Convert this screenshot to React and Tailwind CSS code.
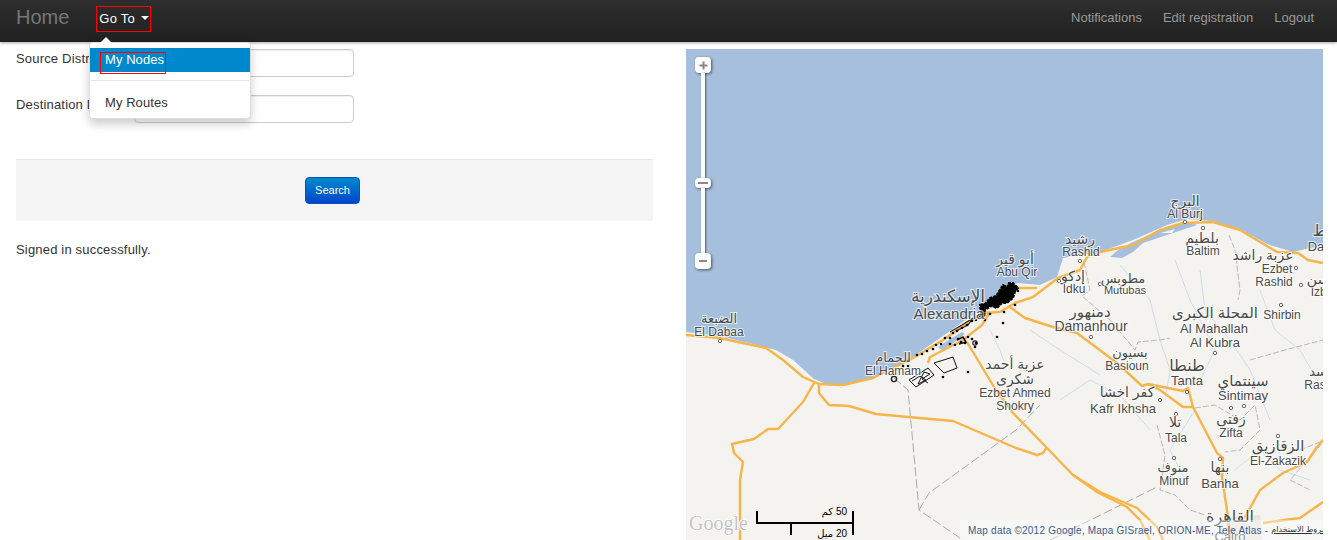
const LAND = '686,332 719,336 749,343 776,350 793,360 814,379 829,385 853,384 879,375 900,365 913,357 930,345 943,336 967,319 983,308 1007,286 1018,283 1040,285 1057,277 1063,258 1100,252 1133,240 1167,225 1187,219 1213,221 1240,229 1267,244 1293,252 1310,248 1323,246 1323,540 686,540'

const ROADS = [
  '686,335 719,338 766,348 783,360 803,377 819,384 843,385 873,378 913,358 943,340 963,326 983,313 1000,312',
  '814,383 803,402 778,429 768,429 754,439 732,444 734,453 743,462 740,480 740,540',
  '819,384 819,393 829,405 849,406 876,414 919,418 953,421 1016,448 1037,455 1043,453 1047,447',
  '967,342 994,387 1013,413 1047,448 1073,475 1100,492 1137,508 1157,527 1163,540',
  '1073,475 1097,492 1127,507 1140,520 1150,540',
  '1000,312 1015,303 1033,297 1058,278 1080,270 1087,257 1100,252 1133,245 1160,230 1183,223 1213,222 1240,230 1277,252 1298,253 1308,260 1323,263',
  '1000,288 1037,288',
  '1010,307 1025,318 1053,327 1077,333 1117,363 1142,386 1148,384 1183,391 1188,388 1193,407 1217,453 1223,458 1222,477 1228,517 1230,540',
  '1148,384 1160,390 1183,407 1193,407',
  '1245,517 1260,490 1283,473 1307,462 1317,447 1323,440',
  '1263,523 1300,518 1323,502',
  '928,363 930,357 963,340 982,325 990,312',
]

const BORDERS = [
  '894,378 908,390 919,510 963,540',
  '919,510 929,493 1016,430 1040,405',
  '1050,540 1157,487',
]

const PROVINCE_LINES = [
  '1084,262 1090,290 1082,296 1110,320 1135,350 1138,342 1160,340 1170,338',
  '1229,235 1235,250 1240,290 1238,300',
  '1157,425 1165,455 1160,490 1175,495 1190,510 1205,515',
  '1195,408 1215,405 1240,420 1255,405 1260,430 1240,450 1225,452',
  '1300,450 1325,440 1290,480 1310,490',
  '1250,360 1285,350 1323,340',
]

const RIVERS = [
  '1120,265 1150,300 1160,340 1170,370 1165,400',
  '1200,270 1205,310 1230,340 1250,370 1270,420',
  '1175,260 1190,300 1215,350 1200,380',
  '1260,290 1275,330 1300,350 1323,390',
  '1060,400 1090,380 1120,395 1150,430',
  '1235,470 1260,450 1280,470 1310,480',
  '1030,330 1060,350 1100,375',
  '990,330 1000,350 1005,365',
  '1195,410 1170,450 1185,480',
]

const LABELS = [
  ['البرج', 1185, 206, 14], ['Al Burj', 1185, 218, 12], ['بلطيم', 1202, 243, 14], ['Baltim', 1203, 255, 12],
  ['رشيد', 1080, 244, 14], ['Rashid', 1081, 256, 12], ['أبو قير', 1015, 264, 14], ['Abu Qir', 1017, 276, 12],
  ['إدكو', 1073, 281, 14], ['Idku', 1074, 293, 12], ['مطوبس', 1123, 283, 13], ['Mutubas', 1125, 294, 11],
  ['دمنهور', 1090, 317, 15], ['Damanhour', 1091, 331, 14], ['بسيون', 1130, 357, 13], ['Basioun', 1127, 370, 12],
  ['المحلة الكبرى', 1215, 318, 15], ['Al Mahallah', 1214, 333, 13], ['Al Kubra', 1215, 347, 13],
  ['عزبة راشد', 1263, 260, 14], ['Ezbet', 1277, 273, 12], ['Rashid', 1274, 286, 12], ['Shirbin', 1282, 319, 12],
  ['Izba', 1322, 296, 12], ['سن', 1318, 284, 14], ['Da', 1316, 251, 13], ['ط', 1320, 236, 16], ['Ras', 1315, 389, 12], ['سد', 1318, 376, 13],
  ['طنطا', 1187, 371, 16], ['Tanta', 1187, 385, 13], ['سينتماي', 1243, 386, 15], ['Sintimay', 1243, 400, 13],
  ['زفتى', 1231, 424, 14], ['Zifta', 1231, 437, 12], ['الزقازيق', 1278, 451, 15], ['El-Zakazik', 1278, 465, 12],
  ['بنها', 1220, 472, 14], ['Banha', 1220, 488, 13], ['القاهرة', 1230, 522, 16], ['Cairo', 1230, 541, 13],
  ['منوف', 1173, 472, 13], ['Minuf', 1174, 485, 12], ['تلا', 1175, 427, 14], ['Tala', 1176, 442, 12],
  ['كفر اخشا', 1127, 397, 14], ['Kafr Ikhsha', 1123, 413, 13],
  ['عزبة أحمد', 1015, 369, 14], ['شكرى', 1015, 384, 14], ['Ezbet Ahmed', 1015, 397, 12], ['Shokry', 1015, 410, 12],
  ['الإسكندرية', 948, 302, 17], ['Alexandria', 949, 319, 15],
  ['الضبعة', 719, 323, 13], ['El Dabaa', 719, 336, 12], ['الحمام', 893, 362, 13], ['El Hamam', 893, 375, 12],
]

const TOWNS = [
  [1185, 222], [1203, 228], [1080, 261], [1296, 268], [1301, 285], [1281, 305], [1059, 281], [1100, 284],
  [1091, 337], [1215, 353], [1187, 392], [1160, 400], [1176, 414], [1174, 458], [1220, 459], [1231, 408],
  [1244, 406], [1278, 436], [720, 341],
]

// the black route nodes along the Alexandria shore
const NODES = [
  [1016, 288], [1018, 291], [1004, 312], [1015, 305], [980, 316], [976, 320], [972, 321], [967, 325], [962, 328],
  [957, 331], [953, 333], [950, 338], [945, 338], [941, 344], [936, 345], [933, 349], [927, 351], [922, 354], [917, 355], [908, 361],
  [903, 366], [880, 374], [908, 366], [958, 339], [961, 342], [965, 343], [955, 345], [972, 339], [976, 343], [975, 347], [968, 372],
  [943, 377], [997, 337], [1003, 323], [950, 344], [968, 337], [990, 314], [985, 320],
]

function MapCanvas() {
  return (
    <svg viewBox="686 49 637 491" className="block w-full h-full">
      <rect x="686" y="49" width="637" height="491" fill="#a5bfdd" />
      <polygon points={LAND} fill="#f4f3f0" />
      {/* lakes */}
      <polygon points="1110,257 1122,258 1133,252 1143,243 1167,235 1197,225 1187,221 1167,227 1133,242 1118,250" fill="#a5bfdd" />
      <polygon points="1160,233 1168,231 1175,229 1172,233" fill="#f4f3f0" />
      <polygon points="1159,240 1166,237 1168,241 1162,243" fill="#f4f3f0" />
      <polygon points="938,347 950,339 962,332 965,334 952,344 942,350" fill="#a5bfdd" />
      <polygon points="1225,517 1260,515 1262,540 1228,540" fill="#e6e5e0" />

      {RIVERS.map(p => <polyline key={p} points={p} fill="none" stroke="#cfdcec" strokeWidth="1" />)}
      {PROVINCE_LINES.map(p => <polyline key={p} points={p} fill="none" stroke="#a9a9a6" strokeWidth="0.8" strokeDasharray="6 2" />)}
      {BORDERS.map(p => <polyline key={p} points={p} fill="none" stroke="#aaaaa8" strokeWidth="1" strokeDasharray="9 3" />)}
      {ROADS.map(p => <polyline key={p} points={p} fill="none" stroke="#f5b548" strokeWidth="2.4" strokeLinejoin="round" />)}

      {/* imported node overlay */}
      <polygon points="980,305 986,303 990,298 996,296 1003,285 1007,287 1009,283 1013,283 1018,288 1015,292 1013,298 1007,303 1002,303 997,308 991,306 985,310 984,317 981,313" fill="#000" stroke="#000" strokeWidth="2" strokeDasharray="3 1" />
      <polygon points="909,380 928,368 934,375 916,387" fill="none" stroke="#111" strokeWidth="1" />
      <polygon points="934,363 953,357 957,368 944,373" fill="none" stroke="#111" strokeWidth="1" />
      <polyline points="912,381 920,376 926,380 918,384 924,372 930,374 922,379 928,383" fill="none" stroke="#111" strokeWidth="1" />
      <polyline points="950,332 962,325 973,318 968,325 956,331" fill="none" stroke="#222" strokeWidth="1.2" />
      <polyline points="957,340 963,337 966,342 959,344" fill="none" stroke="#111" strokeWidth="1.6" />
      <circle cx="894" cy="379" r="2.6" fill="none" stroke="#222" strokeWidth="1.4" />
      <circle cx="975" cy="343" r="2.2" fill="none" stroke="#222" strokeWidth="1.2" />
      {NODES.map(([x, y]) => <circle key={`${x}-${y}`} cx={x} cy={y} r="1.3" fill="#000" />)}

      {TOWNS.map(([x, y]) => <circle key={`${x}-${y}`} cx={x} cy={y} r="1.7" fill="#fff" stroke="#555" strokeWidth="0.9" />)}

      <g className="font-['Liberation_Sans','DejaVu_Sans',sans-serif]" textAnchor="middle" fill="#4a4a4a" stroke="#fff" strokeWidth="2" strokeOpacity="0.7" style={{ paintOrder: 'stroke' }}>
        {LABELS.map(([t, x, y, s]) => <text key={`${t}-${x}`} x={x} y={y} fontSize={s}>{t}</text>)}
      </g>

      {/* Scale */}
      <path d="M757 511V523H853M853 511V535M791 523V535" fill="none" stroke="#000" strokeWidth="2" />
      <g className="font-['Liberation_Sans','DejaVu_Sans',sans-serif] [direction:rtl]" fontSize="10" textAnchor="start" fill="#000">
        <text x="847" y="515">50 كم</text>
        <text x="847" y="537">20 ميل</text>
      </g>

      <text x="689" y="530" fontSize="20" className="font-['Liberation_Serif',serif]" fill="#c4c4c4" stroke="#fff" strokeWidth="1.5" style={{ paintOrder: 'stroke' }}>Google</text>
    </svg>
  )
}

function ZoomButton({ className, children }) {
  return (
    <div className={`flex items-center justify-center w-4 bg-white rounded-sm shadow-[1px_1px_3px_rgba(0,0,0,0.55)] ${className}`}>
      {children}
    </div>
  )
}

function ZoomControl() {
  return (
    <div className="absolute left-[9px] top-2 w-4 flex flex-col items-center">
      <ZoomButton className="h-4">
        <svg width="9" height="9" viewBox="0 0 9 9"><path d="M4.5 0.5V8.5M0.5 4.5H8.5" stroke="#888" strokeWidth="2" /></svg>
      </ZoomButton>
      <div className="w-1 h-[105px] bg-white shadow-[1px_0_2px_rgba(0,0,0,0.5)]" />
      <ZoomButton className="h-[10px]">
        <div className="w-[10px] h-[2px] bg-[#888]" />
      </ZoomButton>
      <div className="w-1 h-[65px] bg-white shadow-[1px_0_2px_rgba(0,0,0,0.5)]" />
      <ZoomButton className="h-4">
        <div className="w-2 h-[2px] bg-[#888]" />
      </ZoomButton>
    </div>
  )
}

function Field({ label, className }) {
  return (
    <div className={`flex items-start ${className}`}>
      <label className="w-[118px] whitespace-nowrap pt-[1px] leading-[18px] text-[#333]">{label}</label>
      <input type="text" className="w-[220px] h-7 bg-white border border-[#ccc] rounded-[4px] shadow-[inset_0_1px_1px_rgba(0,0,0,0.075)]" />
    </div>
  )
}

export default function App() {
  return (
    <div className="relative w-[1337px] h-[540px] overflow-hidden bg-white font-['Liberation_Sans',sans-serif] text-[13px]">
      {/* Navbar */}
      <nav className="relative z-10 flex items-center h-[42px] pl-4 pr-[23px] bg-gradient-to-b from-[#2e2e2e] to-[#202020] shadow-[0_1px_3px_rgba(0,0,0,0.35)]">
        <a className="text-xl text-[#777] leading-none mb-[8px]">Home</a>
        <div className="relative ml-[27px] mb-[4px] flex items-center gap-[6px] h-[26px] w-[55px] pl-[2px] border border-[#f00] text-white tracking-[0.2px]">
          Go To
          <span className="w-0 h-0 border-x-4 border-x-transparent border-t-4 border-t-white mb-[3px]" />
        </div>
        <div className="ml-auto flex gap-[21px] mb-[6px] text-[#999]">
          <a>Notifications</a>
          <a>Edit registration</a>
          <a>Logout</a>
        </div>
      </nav>

      {/* Dropdown */}
      <div className="absolute z-20 left-[89px] top-[42px] w-[162px] h-[77px] pt-[5px] bg-white rounded-[4px] border border-[#ddd] shadow-[0_5px_10px_rgba(0,0,0,0.2)] text-[#333] tracking-[0.07px]">
        <span className="absolute left-[10px] -top-[6px] w-0 h-0 border-x-[6px] border-x-transparent border-b-[6px] border-b-white" />
        <div className="h-6 bg-[#0088cc] text-white leading-6 pl-[11px] relative">
          <span className="ml-[4px]">My Nodes</span>
          <span className="absolute left-[10px] top-[4px] w-[66px] h-[22px] border border-[#f00]" />
        </div>
        <div className="h-px mt-2 mx-px bg-[#e5e5e5]" />
        <div className="mt-[12px] pl-[15px] leading-[20px]">My Routes</div>
      </div>

      <div className="flex pl-4 pr-[14px] justify-between">
        {/* Search form */}
        <main className="w-[637px] tracking-[0.18px]">
          <Field label="Source District" className="mt-[7px]" />
          <Field label="Destination District" className="mt-[18px]" />
          <div className="flex justify-center mt-9 h-[62px] pt-[17px] bg-[#f5f5f5] border-t border-[#e5e5e5]">
            <button className="h-[27px] w-[55px] mr-1 text-[11px] tracking-normal text-white rounded-[4px] border border-[#0055bb] bg-gradient-to-b from-[#0088cc] to-[#0044cc]">Search</button>
          </div>
          <p className="mt-5 text-[#333] leading-[18px]">Signed in successfully.</p>
        </main>

        {/* Map */}
        <div className="relative w-[637px] h-[491px] mt-[7px] overflow-hidden">
          <MapCanvas />
          <ZoomControl />
          <div className="absolute right-0 bottom-0 flex items-center h-5 w-[363px] pl-2 gap-[3px] bg-white/40 text-[10px] tracking-[0.22px] text-[#3b5a8c] whitespace-nowrap font-['Liberation_Sans','DejaVu_Sans',sans-serif]">
            Map data ©2012 Google, Mapa GISrael, ORION-ME, Tele Atlas -
            <span className="text-[#333] underline text-[8px] tracking-normal">شروط الاستخدام</span>
          </div>
        </div>
      </div>
    </div>
  )
}
